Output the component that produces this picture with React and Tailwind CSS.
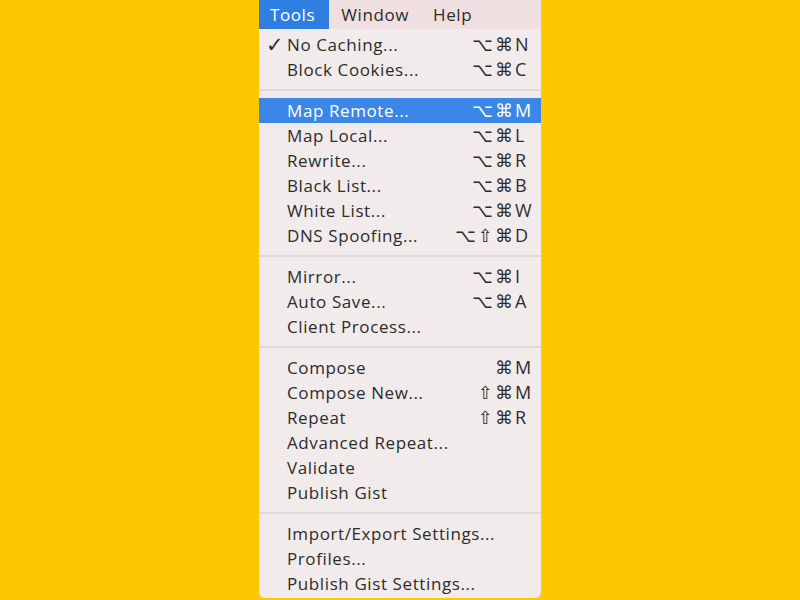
import React from 'react';

const groups = [
  [
    { label: 'No Caching...', mods: '⌥⌘', key: 'N', checked: true },
    { label: 'Block Cookies...', mods: '⌥⌘', key: 'C' },
  ],
  [
    { label: 'Map Remote...', mods: '⌥⌘', key: 'M', active: true },
    { label: 'Map Local...', mods: '⌥⌘', key: 'L' },
    { label: 'Rewrite...', mods: '⌥⌘', key: 'R' },
    { label: 'Black List...', mods: '⌥⌘', key: 'B' },
    { label: 'White List...', mods: '⌥⌘', key: 'W' },
    { label: 'DNS Spoofing...', mods: '⌥⇧⌘', key: 'D' },
  ],
  [
    { label: 'Mirror...', mods: '⌥⌘', key: 'I' },
    { label: 'Auto Save...', mods: '⌥⌘', key: 'A' },
    { label: 'Client Process...' },
  ],
  [
    { label: 'Compose', mods: '⌘', key: 'M' },
    { label: 'Compose New...', mods: '⇧⌘', key: 'M' },
    { label: 'Repeat', mods: '⇧⌘', key: 'R' },
    { label: 'Advanced Repeat...' },
    { label: 'Validate' },
    { label: 'Publish Gist' },
  ],
  [
    { label: 'Import/Export Settings...' },
    { label: 'Profiles...' },
    { label: 'Publish Gist Settings...' },
  ],
];

const MenuItem = ({ item }) => (
  <div
    className={`flex items-center h-[25px] ${
      item.active ? 'bg-[#3a87e7] text-white' : 'text-[#2e2b2b]'
    }`}
  >
    <span className="w-[28px] pl-[7px] text-[21px] leading-none font-bold">{item.checked ? '✓' : ''}</span>
    <span className="flex-1 tracking-[0.6px]">{item.label}</span>
    {item.key && (
      <span className="flex items-center pr-[9px] text-[18px]">
        <span className="tracking-[2px]">{item.mods}</span>
        <span className="w-[17px]">{item.key}</span>
      </span>
    )}
  </div>
);

const App = () => {
  return (
    <div
      className="w-[800px] h-[600px] bg-[#fec800] flex justify-center overflow-hidden"
      style={{ fontFamily: '"Open Sans", "DejaVu Sans", sans-serif' }}
    >
      <div className="w-[282px] h-[598px] flex flex-col bg-[#f1eceb] rounded-b-[6px] text-[17px]">
        <div className="h-[29px] flex items-center bg-[#f0dfe0] text-[#2e2b2b] tracking-[0.6px]">
          <span className="h-full flex items-center pl-[11px] pr-[14px] bg-[#2f7fe2] text-white">Tools</span>
          <span className="ml-[12px]">Window</span>
          <span className="ml-[24px]">Help</span>
        </div>
        <div className="pt-[3px]">
          {groups.map((g, i) => (
            <div key={i}>
              {i > 0 && (
                <div className="h-[16px] flex items-center">
                  <div className="w-full h-[2px] bg-[#e0dbda]" />
                </div>
              )}
              {g.map((item) => (
                <MenuItem key={item.label} item={item} />
              ))}
            </div>
          ))}
        </div>
      </div>
    </div>
  );
};

export default App;
